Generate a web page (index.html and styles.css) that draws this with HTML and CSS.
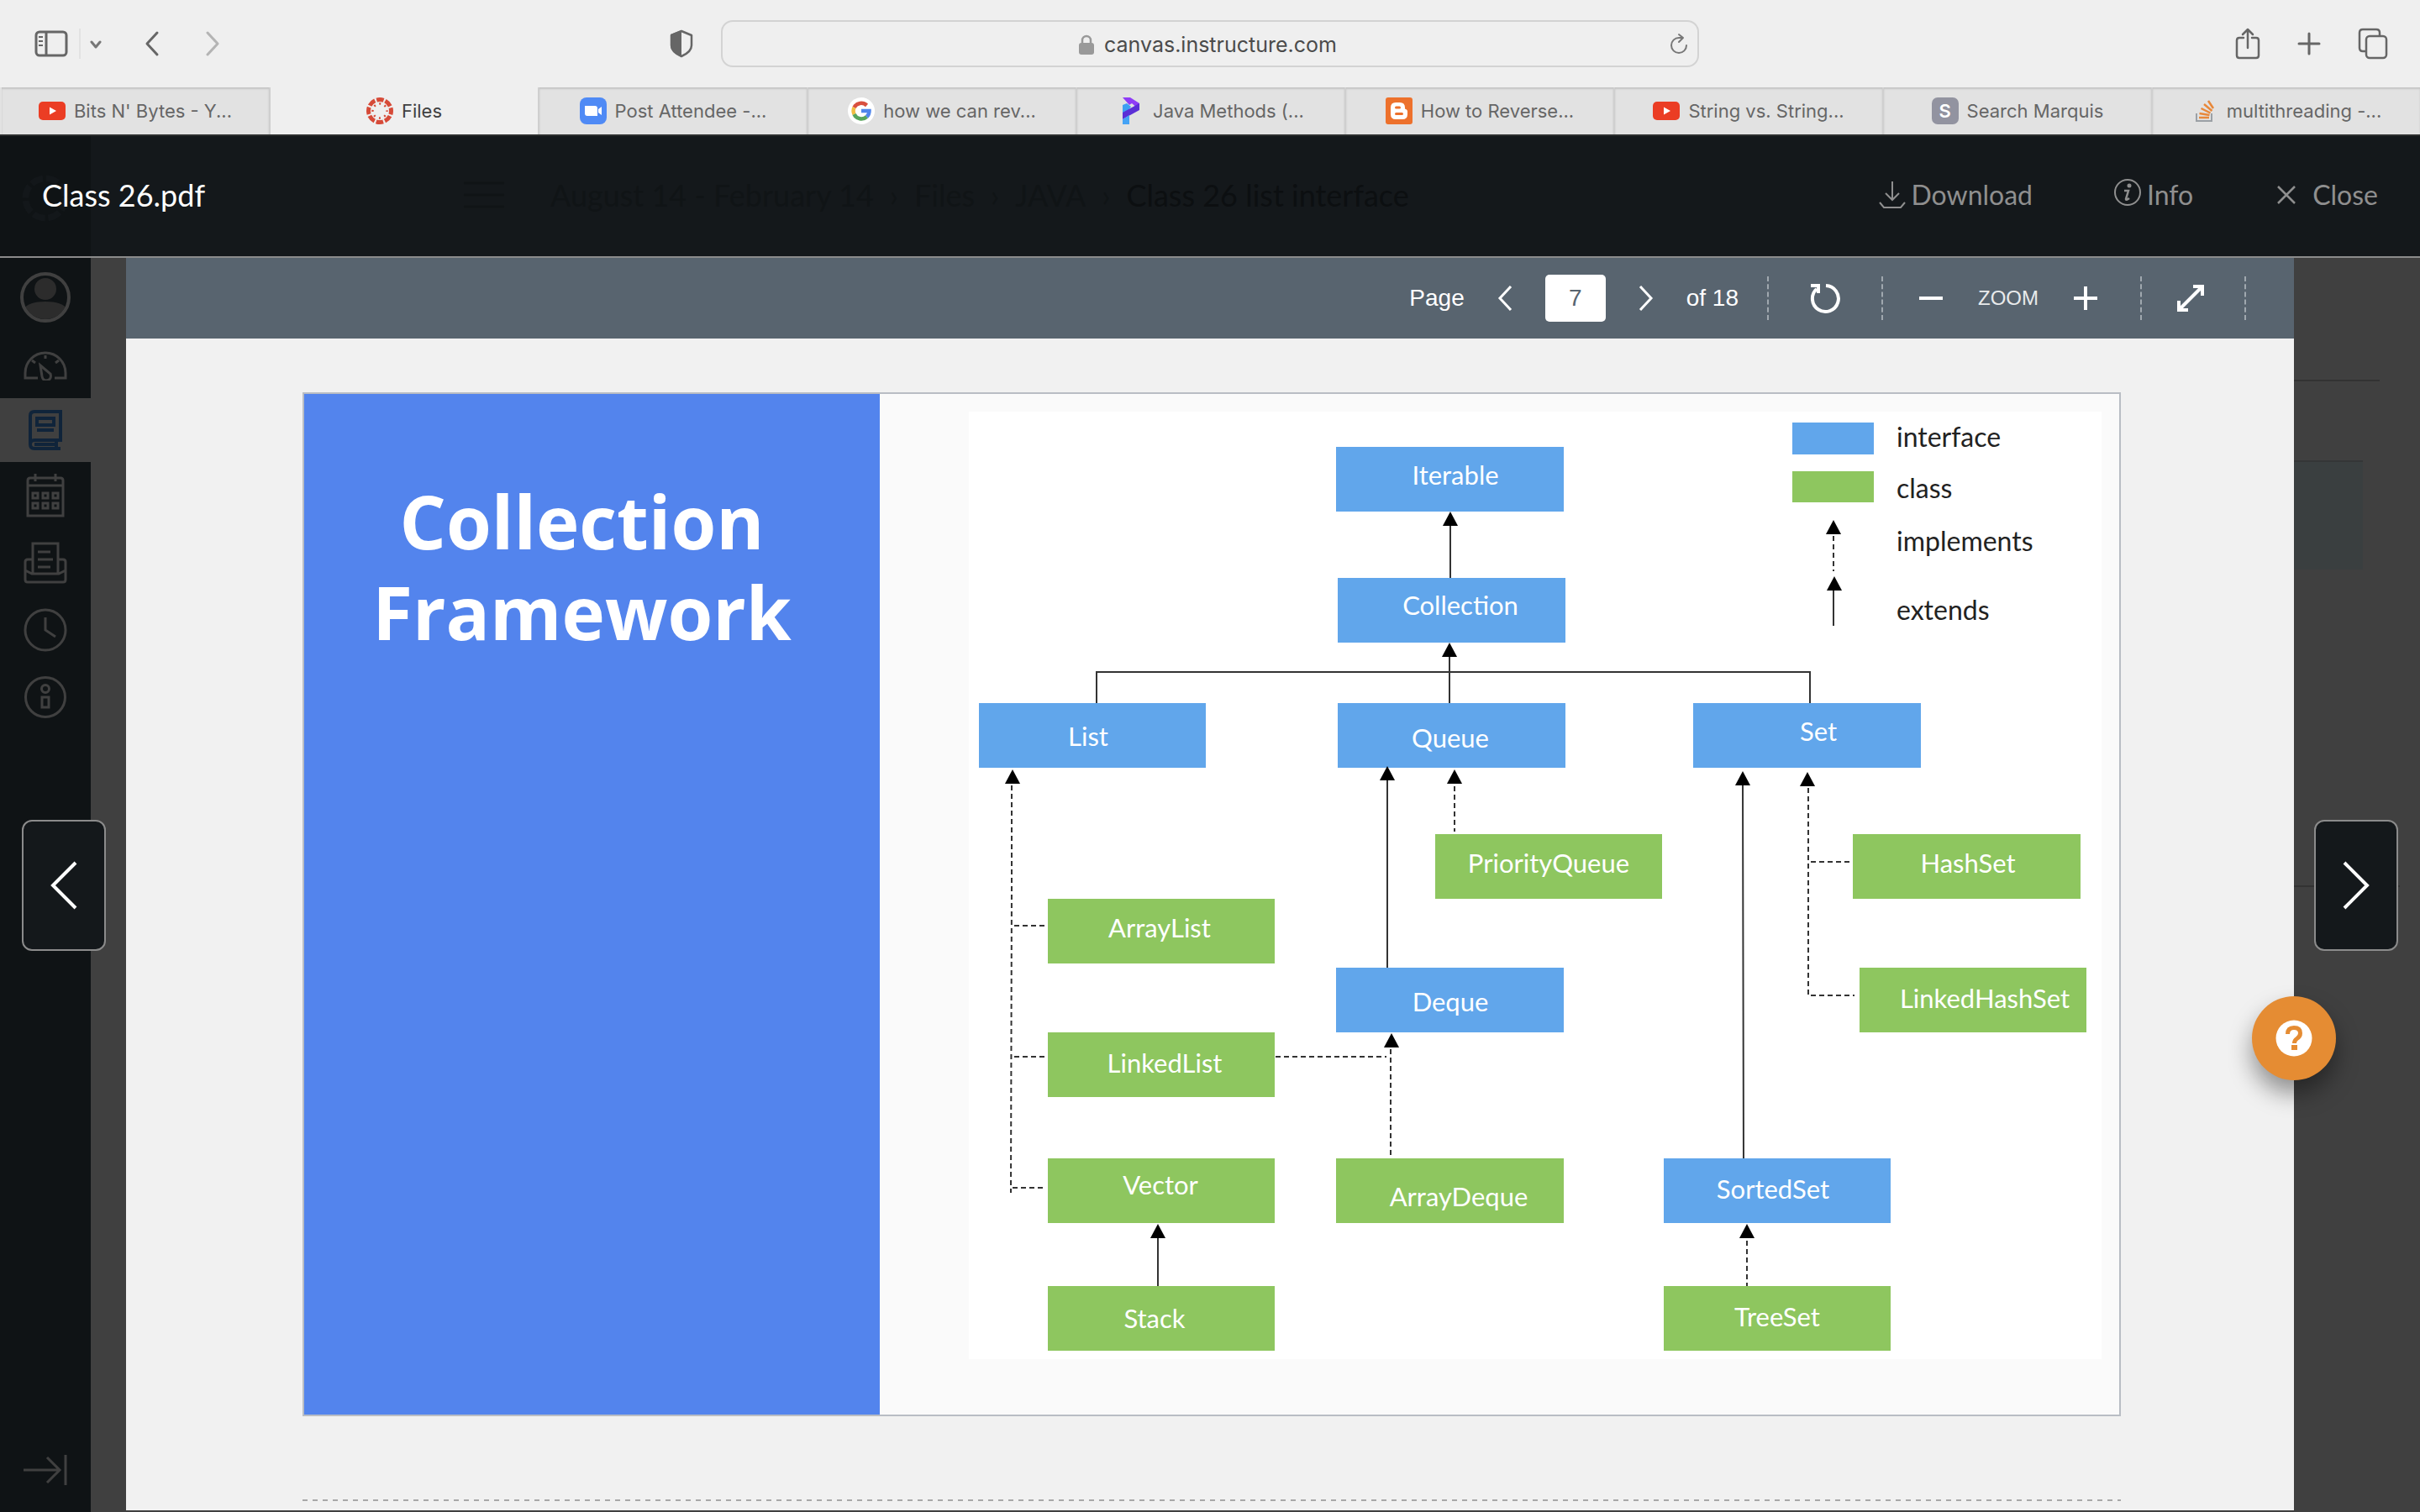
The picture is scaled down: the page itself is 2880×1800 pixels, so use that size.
FILE: index.html
```html
<!DOCTYPE html>
<html lang="en">
<head>
<meta charset="utf-8">
<title>Files</title>
<link rel="stylesheet" href="styles.css">
</head>
<body>
<header class="chrome">
  <div class="chrome-side">
    <button class="icon-btn" aria-label="Sidebar"><svg width="40" height="32" viewBox="0 0 40 32" fill="none" stroke="#666" stroke-width="3"><rect x="2" y="2" width="36" height="28" rx="4"/><path d="M14 2v28"/><path d="M5 8h5M5 13h5M5 18h5" stroke-width="2"/></svg></button>
    <span class="chrome-rule"></span>
    <button class="icon-btn" aria-label="Tab groups"><svg width="14" height="32" viewBox="0 0 14 32" fill="none" stroke="#777" stroke-width="3" stroke-linecap="round" stroke-linejoin="round"><path d="M2 14l5 6 5-6"/></svg></button>
    <button class="icon-btn back" aria-label="Back"><svg width="18" height="32" viewBox="0 0 18 32" fill="none" stroke="#666" stroke-width="3" stroke-linecap="round" stroke-linejoin="round"><path d="M15 3L3 16l12 13"/></svg></button>
    <button class="icon-btn forward" aria-label="Forward"><svg width="18" height="32" viewBox="0 0 18 32" fill="none" stroke="#b4b4b4" stroke-width="3" stroke-linecap="round" stroke-linejoin="round"><path d="M3 3l12 13L3 29"/></svg></button>
    <button class="icon-btn shield" aria-label="Privacy report"><svg width="28" height="34" viewBox="0 0 28 34"><path d="M14 2l12 5v12c0 6-5 10-12 13C7 29 2 25 2 19V7z" fill="none" stroke="#666" stroke-width="2.5" stroke-linejoin="round"/><path d="M14 1v32C6 29 1 25 1 19V6z" fill="#666"/></svg></button>
  </div>
  <form class="address">
    <span class="address-end"></span>
    <label class="address-main">
      <svg width="18" height="24" viewBox="0 0 18 24"><rect y="10" width="18" height="14" rx="3" fill="#999"/><path d="M4 11V7a5 5 0 0110 0v4" fill="none" stroke="#999" stroke-width="2.5"/></svg>
      <input class="address-input" type="text" value="canvas.instructure.com" aria-label="Address">
    </label>
    <button type="button" class="icon-btn address-end" aria-label="Reload"><svg width="22" height="28" viewBox="0 0 22 28" fill="none" stroke="#777" stroke-width="2" stroke-linecap="round" stroke-linejoin="round"><path d="M20 15a9 9 0 11-9-9h4M11 2l5 4-5 5"/></svg></button>
  </form>
  <div class="chrome-side chrome-right">
    <button class="icon-btn" aria-label="Share"><svg width="30" height="38" viewBox="0 0 30 38" fill="none" stroke="#666" stroke-width="2.5" stroke-linecap="round" stroke-linejoin="round"><path d="M10 12H5q-3 0-3 3v18q0 3 3 3h20q3 0 3-3V15q0-3-3-3h-5M15 24V2M9 8l6-6 6 6"/></svg></button>
    <button class="icon-btn" aria-label="New tab"><svg width="28" height="38" viewBox="0 0 28 38" fill="none" stroke="#666" stroke-width="3" stroke-linecap="round"><path d="M2 19h24M14 7v24"/></svg></button>
    <button class="icon-btn" aria-label="Tab overview"><svg width="36" height="38" viewBox="0 0 36 38" fill="none" stroke="#666" stroke-width="2.5"><rect x="10" y="10" width="24" height="26" rx="4"/><path d="M10 28H6q-4 0-4-4V6q0-4 4-4h16q4 0 4 4v4"/></svg></button>
  </div>
</header>
<nav class="tabs" aria-label="Tabs">
  <a class="tab" href="#"><svg width="32" height="32" viewBox="0 0 32 32"><rect y="5" width="32" height="22" rx="5" fill="#eb3d24"/><path d="M13 11.500l8 4.500-8 4.500z" fill="#fff"/></svg>Bits N' Bytes - Y...</a>
  <a class="tab tab-on" href="#"><svg width="32" height="32" viewBox="0 0 32 32"><g fill="none" stroke="#d64a38"><circle cx="16" cy="16" r="13.500" stroke-width="5" stroke-dasharray="8.500 2.100" stroke-dashoffset="4.250"/><circle cx="16" cy="16" r="8.500" stroke-width="2.500" stroke-dasharray="2 4.675" stroke-dashoffset="1"/></g></svg>Files</a>
  <a class="tab" href="#"><svg width="32" height="32" viewBox="0 0 32 32"><rect width="32" height="32" rx="8" fill="#4f8af5"/><path d="M6 10h12q3 0 3 3v9H9q-3 0-3-3zM22 14l4-3v10l-4-3z" fill="#fff"/></svg>Post Attendee -...</a>
  <a class="tab" href="#"><svg width="32" height="32" viewBox="0 0 32 32"><circle cx="16" cy="16" r="16" fill="#fff"/><g fill="none" stroke-width="4.500"><path d="M22.500 9.500A9.500 9.500 0 007.500 12" stroke="#d9503f"/><path d="M7.500 12a9.500 9.500 0 000 8" stroke="#f2bd42"/><path d="M7.500 20a9.500 9.500 0 0015 3" stroke="#58a55c"/><path d="M22.500 23a9.500 9.500 0 003-7H16" stroke="#5086ec"/></g></svg>how we can rev...</a>
  <a class="tab" href="#"><svg width="32" height="32" viewBox="0 0 32 32"><path d="M6 0h9l11 7v8L17 7l-3 2z" fill="#8f3cf7"/><path d="M6 9l5-2 5 4-10 14z" fill="#3ea0f2"/><path d="M6 18L26 7v8L6 26z" fill="#5b2fd6"/><path d="M6 26l8-5v11H6z" fill="#45a3f5"/></svg>Java Methods (...</a>
  <a class="tab" href="#"><svg width="32" height="32" viewBox="0 0 32 32"><rect width="32" height="32" rx="3" fill="#ed712c"/><path d="M12 6h5q6 0 6 6v1q0 1 1 1t2 2v4q0 6-6 6h-8q-6 0-6-6v-8q0-6 6-6z" fill="#fff"/><path d="M12.500 12h4M12.500 19.500h7" stroke="#ed712c" stroke-width="3" stroke-linecap="round"/></svg>How to Reverse...</a>
  <a class="tab" href="#"><svg width="32" height="32" viewBox="0 0 32 32"><rect y="5" width="32" height="22" rx="5" fill="#eb3d24"/><path d="M13 11.500l8 4.500-8 4.500z" fill="#fff"/></svg>String vs. String...</a>
  <a class="tab" href="#"><span class="letter">S</span>Search Marquis</a>
  <a class="tab" href="#"><svg width="32" height="32" viewBox="0 0 32 32" fill="none"><path d="M6 19v9h18v-9" stroke="#9ba0a5" stroke-width="2"/><path d="M9 24h12M9.500 19l12 2M11.500 13l11 5.500M15 8l9.500 8M20 4l6 9" stroke="#e8883a" stroke-width="2.500"/></svg>multithreading -...</a>
</nav>
<div class="app">
  <header class="viewer-head">
    <h1 class="file-name">Class 26.pdf</h1>
    <svg class="ghost-logo" width="56" height="56" viewBox="0 0 32 32" fill="none" stroke="#13171a"><circle cx="16" cy="16" r="13.500" stroke-width="4.500" stroke-dasharray="8.500 2.100"/></svg>
    <div class="ghost-crumbs" aria-hidden="true">
      <svg width="48" height="32" viewBox="0 0 48 32" stroke="#101416" stroke-width="3"><path d="M0 2h48M0 16h48M0 30h48"/></svg>
      <span>August 14 - February 14</span><span>›</span><span>Files</span><span>›</span><span>JAVA</span><span>›</span><span class="ghost-last">Class 26 list interface</span>
    </div>
    <div class="head-actions">
      <a href="#" class="action"><svg width="32" height="32" viewBox="0 0 32 32" fill="none" stroke="currentColor" stroke-width="2"><path d="M16 0v21M8 14l8 8 8-8M1 25l5 6h20l5-6"/></svg>Download</a>
      <a href="#" class="action action-info"><svg width="34" height="38" viewBox="0 0 34 38" fill="none" stroke="currentColor" stroke-width="2"><circle cx="17" cy="16" r="15"/><path d="M13 14h5l-3 10q0 2 4-1" stroke-width="2.500"/><circle cx="19" cy="8" r="1.500" fill="currentColor"/></svg>Info</a>
      <button class="action action-close"><svg width="22" height="22" viewBox="0 0 22 22" stroke="currentColor" stroke-width="2.500"><path d="M1 1l20 20M21 1L1 21"/></svg>Close</button>
    </div>
  </header>
  <div class="body">
    <nav class="side" aria-label="Global">
      <a href="#" class="side-item" aria-label="Account"><svg width="60" height="60" viewBox="0 0 60 60"><clipPath id="av"><circle cx="30" cy="30" r="26"/></clipPath><g clip-path="url(#av)" fill="#2c2c2c" stroke="none"><circle cx="30" cy="20" r="13"/><path d="M4 60V44q6-9 26-9t26 9v16z"/></g><circle cx="30" cy="30" r="28" fill="none" stroke="#404040" stroke-width="4"/></svg></a>
      <a href="#" class="side-item" aria-label="Dashboard"><svg width="52" height="38" viewBox="0 -2 52 38"><path d="M17 33H2v-6a24 24 0 0148 0v6H37M20 18l12 10q2 7-5 8-4 0-5-5zM26 6v4M10 12l4 3M42 12l-4 3"/></svg></a>
      <a href="#" class="side-item side-on" aria-label="Courses"><svg width="40" height="48" viewBox="0 0 40 48"><path d="M2 40V7q0-5 5-5h31v34H7q-5 0-5 5t5 5h31M33 36v10M7 41h26M10 10h20v8H10zM10 24h20"/></svg></a>
      <a href="#" class="side-item" aria-label="Calendar"><svg width="46" height="52" viewBox="0 0 46 52"><path d="M2 50V8q0-3 3-3h36q3 0 3 3v42zM2 14h42M11 0v9M35 0v9"/><path d="M8 23h6v6H8zM20 23h6v6h-6zM32 23h6v6h-6zM8 35h6v6H8zM20 35h6v6h-6zM32 35h6v6h-6z"/></svg></a>
      <a href="#" class="side-item" aria-label="Inbox"><svg width="52" height="50" viewBox="0 0 52 50"><path d="M10 21H5q-3 0-3 3v21q0 3 3 3h42q3 0 3-3V24q0-3-3-3h-5M2 34l8 4h32l8-4M11 38V2h30v36M17 12h15M17 21h18M17 30h15"/></svg></a>
      <a href="#" class="side-item" aria-label="History"><svg width="52" height="52" viewBox="0 0 52 52"><circle cx="26" cy="26" r="24"/><path d="M26 11v15l12 8"/></svg></a>
      <a href="#" class="side-item" aria-label="Help"><svg width="52" height="52" viewBox="0 0 52 52"><circle cx="26" cy="26" r="23.500"/><circle cx="26" cy="16" r="4.500"/><path d="M22 26h8v12h-8z"/></svg></a>
      <button class="side-item side-expand" aria-label="Expand"><svg width="52" height="38" viewBox="0 0 52 38"><path d="M0 19h43M28 4l15 15-15 15M50 1v36" /></svg></button>
    </nav>
    <main class="stage">
      <section class="doc">
        <div class="doc-bar">
          <div class="group pages">
            <label for="page">Page</label>
            <button class="icon-btn arrow" aria-label="Previous page"><svg width="18" height="30" viewBox="0 0 18 30"><path d="M16 1L3 15l13 14"/></svg></button>
            <input id="page" class="page-input" type="text" value="7">
            <button class="icon-btn arrow" aria-label="Next page"><svg width="18" height="30" viewBox="0 0 18 30"><path d="M2 1l13 14L2 29"/></svg></button>
            <span>of 18</span>
          </div>
          <div class="group rotate"><button class="icon-btn" aria-label="Rotate"><svg width="40" height="38" viewBox="0 0 40 38"><path d="M21 4a15.500 15.500 0 11-11 4M3 4h9v9" stroke-width="4"/></svg></button></div>
          <div class="group zoom">
            <button class="icon-btn" aria-label="Zoom out"><svg width="28" height="30" viewBox="0 0 28 30"><path d="M0 15h28" stroke-width="4"/></svg></button>
            <span class="zoom-text">ZOOM</span>
            <button class="icon-btn" aria-label="Zoom in"><svg width="28" height="30" viewBox="0 0 28 30"><path d="M0 15h28M14 1v28" stroke-width="4"/></svg></button>
          </div>
          <div class="group full"><button class="icon-btn" aria-label="Full screen"><svg width="34" height="34" viewBox="0 0 34 34"><path d="M4 30L30 4M20 3h11v11M3 20v11h11" stroke-width="4"/></svg></button></div>
        </div>
        <div class="doc-scroll">
          <article class="slide">
            <h2 class="slide-title">Collection<br>Framework</h2>
            <div class="slide-figure">
              <svg class="diagram" viewBox="1153 490 1348 1128">
                <defs><path id="head" d="M0 0L9 17H-9z" fill="#000"/></defs>
                <rect x="1153" y="490" width="1348" height="1128" fill="#fff"/>
                <g class="if">
                  <rect x="1590" y="532" width="271" height="77"/><rect x="1592" y="688" width="271" height="77"/>
                  <rect x="1165" y="837" width="270" height="77"/><rect x="1592" y="837" width="271" height="77"/><rect x="2015" y="837" width="271" height="77"/>
                  <rect x="1590" y="1152" width="271" height="77"/><rect x="1980" y="1379" width="270" height="77"/><rect x="2133" y="503" width="97" height="38"/>
                </g>
                <g class="cl">
                  <rect x="1708" y="993" width="270" height="77"/><rect x="2205" y="993" width="271" height="77"/><rect x="1247" y="1070" width="270" height="77"/>
                  <rect x="2213" y="1152" width="270" height="77"/><rect x="1247" y="1229" width="270" height="77"/><rect x="1247" y="1379" width="270" height="77"/>
                  <rect x="1590" y="1379" width="271" height="77"/><rect x="1247" y="1531" width="270" height="77"/><rect x="1980" y="1531" width="270" height="77"/><rect x="2133" y="561" width="97" height="37"/>
                </g>
                <g class="wire"><path d="M1726 620v68M1725 775v62M1305 837v-37h849v37M1651 925v227M1378 1470v61M2074 930l1 449M2182 700v45"/></g>
                <g class="wire dash"><path d="M1204 935v120l-1 365M1207 1102h36M1207 1258h36M1205 1414h36M1731 936v54M1655 1249v128M1518 1258h132M2152 938v247h55M2155 1026h48M2079 1477v54M2182 638v42"/></g>
                <use href="#head" x="1726" y="609"/><use href="#head" x="1725" y="765"/><use href="#head" x="1205" y="916"/><use href="#head" x="1651" y="912"/><use href="#head" x="1731" y="916"/><use href="#head" x="1656" y="1230"/><use href="#head" x="1378" y="1457"/><use href="#head" x="2074" y="918"/><use href="#head" x="2151" y="919"/><use href="#head" x="2079" y="1457"/><use href="#head" x="2182" y="619"/><use href="#head" x="2183" y="686"/>
                <g class="names">
                  <text x="1732" y="577">Iterable</text><text x="1738" y="732">Collection</text><text x="1295" y="888">List</text><text x="1726" y="890">Queue</text><text x="2164" y="882">Set</text>
                  <text x="1843" y="1039">PriorityQueue</text><text x="2342" y="1039">HashSet</text><text x="1380" y="1116">ArrayList</text><text x="1726" y="1204">Deque</text><text x="2362" y="1200">LinkedHashSet</text>
                  <text x="1386" y="1277">LinkedList</text><text x="1381" y="1422">Vector</text><text x="1736" y="1436">ArrayDeque</text><text x="2110" y="1427">SortedSet</text><text x="1374" y="1581">Stack</text><text x="2115" y="1579">TreeSet</text>
                </g>
                <g class="legend"><text x="2257" y="532">interface</text><text x="2257" y="593">class</text><text x="2257" y="656">implements</text><text x="2257" y="738">extends</text></g>
              </svg>
            </div>
          </article>
          <div class="page-break"></div>
        </div>
      </section>
      <aside class="behind"><div class="behind-rule"></div><div class="behind-row"></div><div class="behind-rule behind-foot"></div></aside>
    </main>
    <button class="step step-prev" aria-label="Previous file"><svg width="34" height="58" viewBox="0 0 34 58"><path d="M31 2L4 29l27 27"/></svg></button>
    <button class="step step-next" aria-label="Next file"><svg width="34" height="58" viewBox="0 0 34 58"><path d="M3 2l27 27L3 56"/></svg></button>
    <button class="help" aria-label="Help"><svg width="44" height="44" viewBox="0 0 44 44"><circle cx="22" cy="22" r="21.500" fill="#fff"/><path d="M14.500 17q0-7.500 7.500-7.500t7.500 6.500q0 4-4 6.500-3 2-3 5.500" fill="none" stroke="#e58c33" stroke-width="5"/><path d="M19 30h7v6h-7z" fill="#e58c33"/></svg></button>
  </div>
</div>
</body>
</html>
```
FILE: styles.css
```css
* { box-sizing: border-box; }
body {
  margin: 0;
  min-height: 100vh;
  display: flex;
  flex-direction: column;
  font-family: Inter, "Liberation Sans", sans-serif;
  background: #404040;
}
button, input { font: inherit; color: inherit; }
button { background: none; border: 0; padding: 0; cursor: pointer; }
a { color: inherit; text-decoration: none; }
svg { display: block; flex: none; }
.icon-btn { display: flex; align-items: center; justify-content: center; }

/* Browser chrome */
.chrome {
  height: 104px;
  display: grid;
  grid-template-columns: 1fr minmax(0, 1164px) 1fr;
  align-items: center;
  background: #efefef;
}
.chrome-side { display: flex; align-items: center; padding: 0 33px 0 41px; }
.chrome-right { justify-content: flex-end; gap: 44px; padding-right: 38px; }
.chrome-rule { width: 2px; height: 36px; margin: 0 11px 0 13px; background: #e2e2e2; }
.back { margin-left: 51px; }
.forward { margin-left: 54px; }
.shield { margin-left: auto; }
.address {
  height: 56px;
  margin: 0;
  padding: 2px 10px 0;
  display: flex;
  align-items: center;
  justify-content: space-between;
  border: 2px solid #d3d3d3;
  border-radius: 14px;
}
.address-end { width: 24px; }
.address-main { display: flex; align-items: center; gap: 12px; }
.address-input {
  width: 282px;
  padding: 0;
  border: 0;
  background: none;
  font-size: 25px;
  color: #4b4b4b;
}

/* Tabs */
.tabs { display: flex; height: 56px; background: #e2e2e2; }
.tab {
  flex: 1;
  display: flex;
  align-items: center;
  justify-content: center;
  gap: 10px;
  font-size: 22px;
  white-space: nowrap;
  color: #666;
  border-left: 2px solid #cfcfcf;
  box-shadow: inset 0 2px 2px #c4c4c4;
}
.tab:first-child { border-left-color: transparent; }
.tab-on { background: #efefef; color: #404040; box-shadow: none; }
.letter {
  width: 32px;
  line-height: 32px;
  border-radius: 7px;
  background: #9293a0;
  color: #fff;
  font-weight: 600;
  text-align: center;
}

/* File viewer header */
.app { flex: 1; display: flex; flex-direction: column; font-family: Lato, sans-serif; }
.viewer-head {
  position: relative;
  height: 147px;
  padding: 0 50px 4px;
  display: flex;
  align-items: center;
  justify-content: space-between;
  background: linear-gradient(90deg, #0f1315 108px, #14181b 108px);
  border-top: 2px solid #2c2e2e;
  border-bottom: 2px solid #8b8b8b;
}
.file-name { margin: 0; font-size: 36px; font-weight: 400; line-height: 40px; color: #fff; z-index: 1; }
.ghost-logo { position: absolute; left: 26px; top: 46px; }
.ghost-crumbs {
  position: absolute;
  left: 552px;
  top: 50px;
  display: flex;
  align-items: center;
  gap: 19px;
  font-size: 36px;
  line-height: 40px;
  color: #101416;
}
.ghost-crumbs svg { margin-right: 36px; }
.ghost-last { color: #0c0f11; }
.head-actions { display: flex; align-items: center; color: #8f8f8f; font-size: 32px; line-height: 40px; }
.action { display: flex; align-items: center; gap: 6px; }
.action-info { margin-left: 96px; }
.action-close { margin-left: 100px; gap: 20px; }

/* Layout under the header */
.body { flex: 1; position: relative; display: flex; }
.side {
  width: 108px;
  padding-top: 7px;
  padding-bottom: 10px;
  display: flex;
  flex-direction: column;
  background: #0f1315;
}
.side-item { height: 80px; display: flex; align-items: center; justify-content: center; }
.side-item svg { fill: none; stroke: #404040; stroke-width: 3; }
.side-on { height: 76px; background: #404040; }
.side-on svg { stroke: #10243a; stroke-width: 4; }
.side-expand { margin-top: auto; }
.stage { flex: 1; min-width: 0; display: flex; padding: 0 0 2px 42px; }
.doc { flex: 1; min-width: 0; display: flex; flex-direction: column; background: #f1f1f1; }

/* Document toolbar */
.doc-bar {
  height: 96px;
  padding-right: 57px;
  display: flex;
  align-items: center;
  justify-content: flex-end;
  background: #58646f;
  color: #fff;
  font-family: "Liberation Sans", sans-serif;
  font-size: 28px;
}
.doc-bar svg { fill: none; stroke: #fff; }
.arrow svg { stroke-width: 3; }
.group {
  height: 52px;
  display: flex;
  align-items: center;
  justify-content: center;
  border-right: 2px dashed #a0a8af;
}
.pages { gap: 39px; padding-right: 34px; }
.page-input {
  width: 72px;
  height: 56px;
  padding: 0;
  border: 0;
  border-radius: 5px;
  background: #fff;
  color: #58646f;
  text-align: center;
}
.rotate { width: 136px; }
.zoom { width: 308px; gap: 42px; padding-right: 8px; }
.zoom-text { font-size: 24px; color: #e8eaeb; }
.full { width: 124px; padding-right: 6px; }

/* Slide */
.doc-scroll { padding: 64px 206px 10px 210px; }
.slide {
  display: grid;
  grid-template-columns: 685fr 1475fr;
  border: 2px solid #b9bdc4;
  background: #fafafa;
}
.slide-title {
  margin: 0;
  padding: 97px 24px 0 0;
  background: #5384ed;
  color: #fff;
  font: 700 87px/108px "Open Sans", sans-serif;
  text-align: center;
}
.slide-figure { padding: 21px 21px 66px 106px; }
.diagram { width: 100%; height: auto; font-size: 32px; }
.if { fill: #61a6eb; }
.cl { fill: #8ec65f; }
.wire { fill: none; stroke: #333; stroke-width: 2; }
.dash { stroke-dasharray: 6 4; }
.names { fill: #fff; text-anchor: middle; font-size: 31px; }
.legend { fill: #222; }
.page-break {
  height: 2px;
  margin-top: 99px;
  background: repeating-linear-gradient(90deg, #a8a8a8 0 6px, transparent 6px 12px);
}

/* Dimmed page seen beside the document */
.behind { width: 150px; padding-top: 145px; }
.behind-rule { width: 102px; height: 2px; background: #333; }
.behind-row { width: 82px; height: 130px; margin-top: 94px; background: #3a3f40; border-top: 2px solid #343637; }
.behind-foot { width: 126px; margin-top: 376px; }

/* Overlaid controls */
.step {
  position: absolute;
  top: 669px;
  width: 100px;
  height: 156px;
  display: flex;
  align-items: center;
  justify-content: center;
  border: 2px solid #8b8b8b;
  border-radius: 12px;
  background: #14181b;
}
.step svg { fill: none; stroke: #fff; stroke-width: 4; }
.step-prev { left: 26px; }
.step-next { right: 26px; }
.help {
  position: absolute;
  top: 879px;
  right: 100px;
  width: 100px;
  height: 100px;
  display: flex;
  align-items: center;
  justify-content: center;
  border-radius: 50%;
  background: #e58c33;
  box-shadow: 0 16px 28px rgba(0, 0, 0, .4);
}
```
